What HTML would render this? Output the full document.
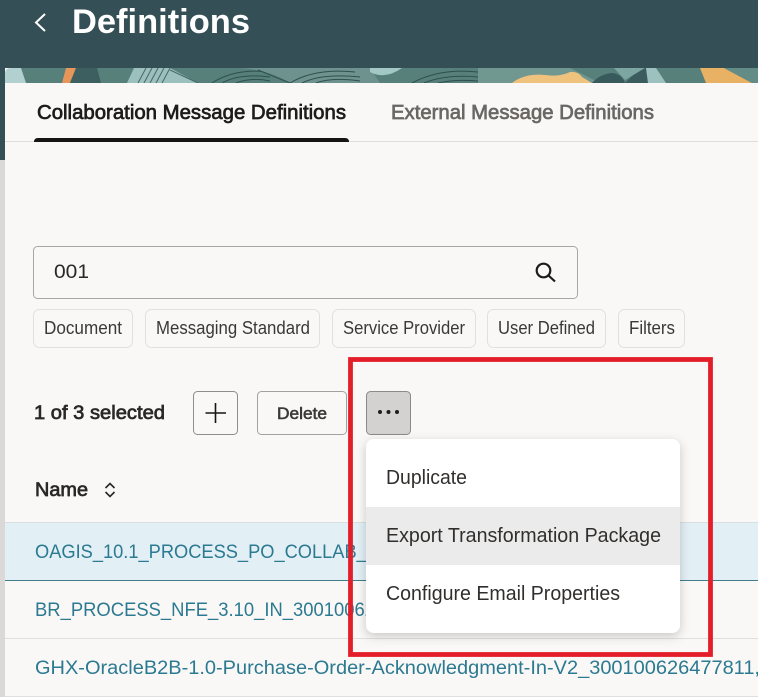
<!DOCTYPE html>
<html><head><meta charset="utf-8"><style>
html,body{margin:0;padding:0;width:758px;height:697px;overflow:hidden;background:#faf8f6}
svg{display:block;position:absolute;left:0;top:0}
text{font-family:"Liberation Sans",sans-serif}
</style></head><body>
<svg width="758" height="697" viewBox="0 0 758 697" xmlns="http://www.w3.org/2000/svg">
<defs>
<filter id="sh" x="-10%" y="-10%" width="120%" height="125%"><feDropShadow dx="0" dy="3" stdDeviation="5" flood-color="#000" flood-opacity=".2"/></filter>
<filter id="bl"><feGaussianBlur stdDeviation=".35"/></filter>
<clipPath id="bn"><path d="M5 83V74q0-6 6-6H758V83Z"/></clipPath>
</defs>
<rect width="758" height="697" fill="#faf8f6"/>
<rect width="758" height="68" fill="#345056"/>
<rect y="68" width="5" height="92" fill="#345056"/>
<rect y="160" width="5" height="537" fill="#dbd9d7"/>
<!-- banner -->
<g clip-path="url(#bn)"><g filter="url(#bl)">
<rect x="5" y="68" width="753" height="15" fill="#568079"/>
<path d="M5 68H21L26 83H5Z" fill="#b3d0d0"/>
<path d="M66 68H76L70 83H62Z" fill="#e8955a"/>
<path d="M76 68H97L101 83H70Z" fill="#3c5f61"/>
<path d="M134 68H170L198 83H127Z" fill="#9cc0bd"/>
<path d="M138 83L146 68M144 83L152 68M150 83L158 68M156 83L164 68M162 83L170 68M170 70L198 83" stroke="#47686a" stroke-width="1" fill="none"/>
<path d="M212 83Q235 68 270 72M222 83Q240 73 270 77M236 83Q252 77 270 81" stroke="#2f4f50" stroke-width="1" fill="none"/>
<path d="M240 68H370L380 83H290Q270 70 240 68Z" fill="#6e938e"/>
<path d="M290 83Q315 68 355 72M302 83Q322 73 360 77M316 83Q332 77 360 81M258 70L290 83" stroke="#2f4f50" stroke-width="1" fill="none"/>
<path d="M370 72Q385 80 402 68H370Z" fill="#a4c8c5"/>
<path d="M412 83Q440 68 478 72M424 83Q446 74 478 77M438 83Q455 79 478 81" stroke="#2f4f50" stroke-width="1" fill="none"/>
<path d="M478 68H570L600 83H478Z" fill="#6f9790"/>
<path d="M512 83Q525 73 545 75Q560 77 570 72Q578 71 582 77L592 83Z" fill="#efc27d"/>
<path d="M592 83Q600 74 612 73Q622 74 625 83Z" fill="#385a5d"/>
<path d="M625 83L640 68H646L648 83Z" fill="#3b5c5f"/>
<path d="M614 68H645L625 80Z" fill="#7da5a2"/>
<path d="M646 68H656L666 83H648Z" fill="#9dc1bf"/>
<path d="M700 68H724L752 83H706Z" fill="#e8b163"/>
<path d="M724 68H758V83H752Z" fill="#638c87"/>
</g></g>
<!-- header -->
<path d="M45 14L36 22.500L45 31" fill="none" stroke="#fff" stroke-width="2"/>
<text x="72" y="33" font-size="34" font-weight="700" fill="#fff" textLength="178" lengthAdjust="spacingAndGlyphs">Definitions</text>
<!-- tabs -->
<text x="37" y="119" font-size="20" fill="#1e1c1a" stroke="#1e1c1a" stroke-width=".7" textLength="309" lengthAdjust="spacingAndGlyphs">Collaboration Message Definitions</text>
<text x="391" y="119" font-size="20" fill="#6a6764" stroke="#6a6764" stroke-width=".7" textLength="263" lengthAdjust="spacingAndGlyphs">External Message Definitions</text>
<rect x="5" y="141" width="753" height="1" fill="#dfdddb"/>
<path d="M34 142Q34 138 38 138H345Q349 138 349 142Z" fill="#161513"/>
<!-- search -->
<rect x="33.5" y="246.5" width="544" height="52" rx="4" fill="#faf8f6" stroke="#a9a7a4"/>
<text x="54" y="278" font-size="19" fill="#2a2826" textLength="35" lengthAdjust="spacingAndGlyphs">001</text>
<circle cx="543.500" cy="270.500" r="6.800" fill="none" stroke="#1e1c1a" stroke-width="2.200"/>
<path d="M548.500 275.500L555 281.500" stroke="#1e1c1a" stroke-width="2.200"/>
<!-- chips -->
<g fill="#faf8f6" stroke="#e2e0dd">
<rect x="33.5" y="309.5" width="99" height="38" rx="6"/>
<rect x="145.5" y="309.5" width="174" height="38" rx="6"/>
<rect x="332.5" y="309.5" width="143" height="38" rx="6"/>
<rect x="487.5" y="309.5" width="118" height="38" rx="6"/>
<rect x="618.5" y="309.5" width="66" height="38" rx="6"/>
</g>
<g font-size="18" fill="#3b3937">
<text x="44" y="334" textLength="78" lengthAdjust="spacingAndGlyphs">Document</text>
<text x="156" y="334" textLength="154" lengthAdjust="spacingAndGlyphs">Messaging Standard</text>
<text x="343" y="334" textLength="122" lengthAdjust="spacingAndGlyphs">Service Provider</text>
<text x="498" y="334" textLength="97" lengthAdjust="spacingAndGlyphs">User Defined</text>
<text x="629" y="334" textLength="46" lengthAdjust="spacingAndGlyphs">Filters</text>
</g>
<!-- toolbar -->
<text x="34" y="419" font-size="19" fill="#2a2826" stroke="#2a2826" stroke-width=".7" textLength="131" lengthAdjust="spacingAndGlyphs">1 of 3 selected</text>
<rect x="193.5" y="391.5" width="44" height="43" rx="4" fill="#faf8f6" stroke="#8f8d8a"/>
<path d="M215.500 403V423M205.500 413H226" stroke="#161513" stroke-width="1.600"/>
<rect x="257.5" y="391.5" width="89" height="43" rx="4" fill="#faf8f6" stroke="#a3a19e"/>
<text x="277" y="419" font-size="17" fill="#3b3937" stroke="#3b3937" stroke-width=".6" textLength="50" lengthAdjust="spacingAndGlyphs">Delete</text>
<rect x="366.5" y="391.5" width="44" height="43" rx="4" fill="#d3d2d0" stroke="#8c8a87"/>
<g fill="#201e1c"><circle cx="380" cy="412" r="2"/><circle cx="388.5" cy="412" r="2"/><circle cx="397" cy="412" r="2"/></g>
<!-- table -->
<text x="35" y="496" font-size="19" fill="#2a2826" stroke="#2a2826" stroke-width=".7" textLength="53" lengthAdjust="spacingAndGlyphs">Name</text>
<path d="M105.500 488L110 483.500L114.500 488M105.500 492L110 496.500L114.500 492" fill="none" stroke="#2a2826" stroke-width="1.600"/>
<rect x="5" y="522" width="753" height="59" fill="#e2eff5"/>
<rect x="5" y="522" width="753" height="1" fill="#d9dedf"/>
<rect x="5" y="580" width="753" height="1" fill="#3f7c8c"/>
<rect x="5" y="638" width="753" height="1" fill="#e1dfdd"/>
<g font-size="19" fill="#2b7a91">
<text x="35" y="558" textLength="345" lengthAdjust="spacingAndGlyphs">OAGIS_10.1_PROCESS_PO_COLLAB_N</text>
<text x="35" y="616" textLength="340" lengthAdjust="spacingAndGlyphs">BR_PROCESS_NFE_3.10_IN_30010062</text>
<text x="35" y="674" textLength="725" lengthAdjust="spacingAndGlyphs">GHX-OracleB2B-1.0-Purchase-Order-Acknowledgment-In-V2_300100626477811,</text>
</g>
<rect x="5" y="696" width="753" height="1" fill="#e1dfdd"/>
<!-- menu -->
<rect x="366" y="439" width="314" height="194" rx="8" fill="#fff" filter="url(#sh)"/>
<rect x="366" y="507" width="314" height="58" fill="#ebebeb"/>
<g font-size="20" fill="#312f2d">
<text x="386" y="484" textLength="81" lengthAdjust="spacingAndGlyphs">Duplicate</text>
<text x="386" y="542" textLength="275" lengthAdjust="spacingAndGlyphs">Export Transformation Package</text>
<text x="386" y="600" textLength="234" lengthAdjust="spacingAndGlyphs">Configure Email Properties</text>
</g>
<!-- red frame -->
<rect x="350.500" y="359.500" width="360" height="295" fill="none" stroke="#e31e2a" stroke-width="4.800"/>
</svg>
</body></html>
